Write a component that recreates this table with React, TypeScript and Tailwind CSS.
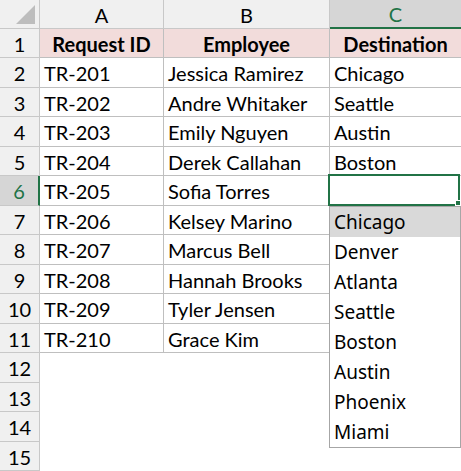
import React from "react"

const rows = [
  ["TR-201", "Jessica Ramirez", "Chicago"],
  ["TR-202", "Andre Whitaker", "Seattle"],
  ["TR-203", "Emily Nguyen", "Austin"],
  ["TR-204", "Derek Callahan", "Boston"],
  ["TR-205", "Sofia Torres", ""],
  ["TR-206", "Kelsey Marino", ""],
  ["TR-207", "Marcus Bell", ""],
  ["TR-208", "Hannah Brooks", ""],
  ["TR-209", "Tyler Jensen", ""],
  ["TR-210", "Grace Kim", ""],
]

const options = ["Chicago", "Denver", "Atlanta", "Seattle", "Boston", "Austin", "Phoenix", "Miami"]

// row heights alternate to land on excel's ~29.5px rows
const heights = ["h-[29px]", "h-[30px]"]

export default function App() {
  const font = { fontFamily: "Lato, 'Liberation Sans', sans-serif" }

  return (
    <div className="w-[461px] h-[471px] overflow-hidden bg-white text-[20px] text-black select-none" style={font}>
      {/* Column headers */}
      <div className="flex h-[29px] bg-[#f0f0f0]">
        <div className="w-[40px] shrink-0 border-r border-b border-[#c8c8c8] relative">
          <svg className="absolute left-0 top-0" width="39" height="28">
            <polygon points="16,24 35,24 35,5" fill="#bdbdbd" />
          </svg>
        </div>
        <div className="w-[124px] shrink-0 border-r border-b border-[#c8c8c8] flex items-center justify-center pt-[1px]">A</div>
        <div className="w-[166px] shrink-0 border-r border-b border-[#c8c8c8] flex items-center justify-center pt-[1px]">B</div>
        <div className="flex-1 bg-[#d6d6d6] border-b-2 border-[#217346] flex items-center justify-center pt-[1px] text-[#217346]">C</div>
      </div>

      {/* Row 1 - table header */}
      <div className="flex h-[29px]">
        <div className="w-[40px] shrink-0 bg-[#f0f0f0] border-r border-b border-[#c8c8c8] flex items-center justify-center pt-[1px]">1</div>
        <div className="w-[124px] shrink-0 bg-[#f2dcdb] border-r border-b border-[#bfbfbf] flex items-center justify-center pt-[1px] font-bold">Request ID</div>
        <div className="w-[166px] shrink-0 bg-[#f2dcdb] border-r border-b border-[#bfbfbf] flex items-center justify-center pt-[1px] font-bold">Employee</div>
        <div className="flex-1 bg-[#f2dcdb] border-b border-[#bfbfbf] flex items-center justify-center pt-[1px] font-bold">Destination</div>
      </div>

      {/* Data rows */}
      {rows.map((r, i) => {
        const n = i + 2
        const selected = n === 6
        return (
          <div key={n} className={`flex ${heights[(i + 1) % 2]}`}>
            <div
              className={`w-[40px] shrink-0 border-b border-[#c8c8c8] flex items-center justify-center pt-[1px] ${
                selected ? "bg-[#d6d6d6] text-[#217346] border-r-2 border-r-[#217346]" : "bg-[#f0f0f0] border-r"
              }`}
            >
              {n}
            </div>
            <div className="w-[124px] shrink-0 border-r border-b border-[#bfbfbf] flex items-center pl-[4px] pt-[1px]">{r[0]}</div>
            <div className="w-[166px] shrink-0 border-r border-b border-[#bfbfbf] flex items-center pl-[4px] pt-[1px]">{r[1]}</div>
            <div className="flex-1 border-b border-[#bfbfbf] flex items-center pl-[4px] pt-[1px] relative">
              {r[2]}
              {selected && (
                <>
                  <div className="absolute left-[-2px] top-[-2px] right-[1px] bottom-[-1px] border-2 border-[#217346]" />
                  <div className="absolute right-0 bottom-[-1px] w-[6px] h-[6px] bg-[#217346] border border-white" />
                  {/* Validation dropdown */}
                  <div
                    className="absolute left-[-1px] top-[30px] w-[132px] bg-white border border-[#a6a6a6] z-10"
                    style={{ fontFamily: "'Noto Sans', 'Open Sans', sans-serif" }}
                  >
                    {options.map((o, k) => (
                      <div key={o} className={`h-[30px] flex items-center pl-[4px] text-[19px] ${k === 0 ? "bg-[#d9d9d9]" : ""}`}>
                        {o}
                      </div>
                    ))}
                  </div>
                </>
              )}
            </div>
          </div>
        )
      })}

      {/* Empty rows */}
      {[12, 13, 14, 15].map((n, i) => (
        <div key={n} className={`flex ${heights[(i + 1) % 2]}`}>
          <div className="w-[40px] shrink-0 bg-[#f0f0f0] border-r border-b border-[#c8c8c8] flex items-center justify-center pt-[1px]">{n}</div>
          <div className="flex-1" />
        </div>
      ))}
    </div>
  )
}
